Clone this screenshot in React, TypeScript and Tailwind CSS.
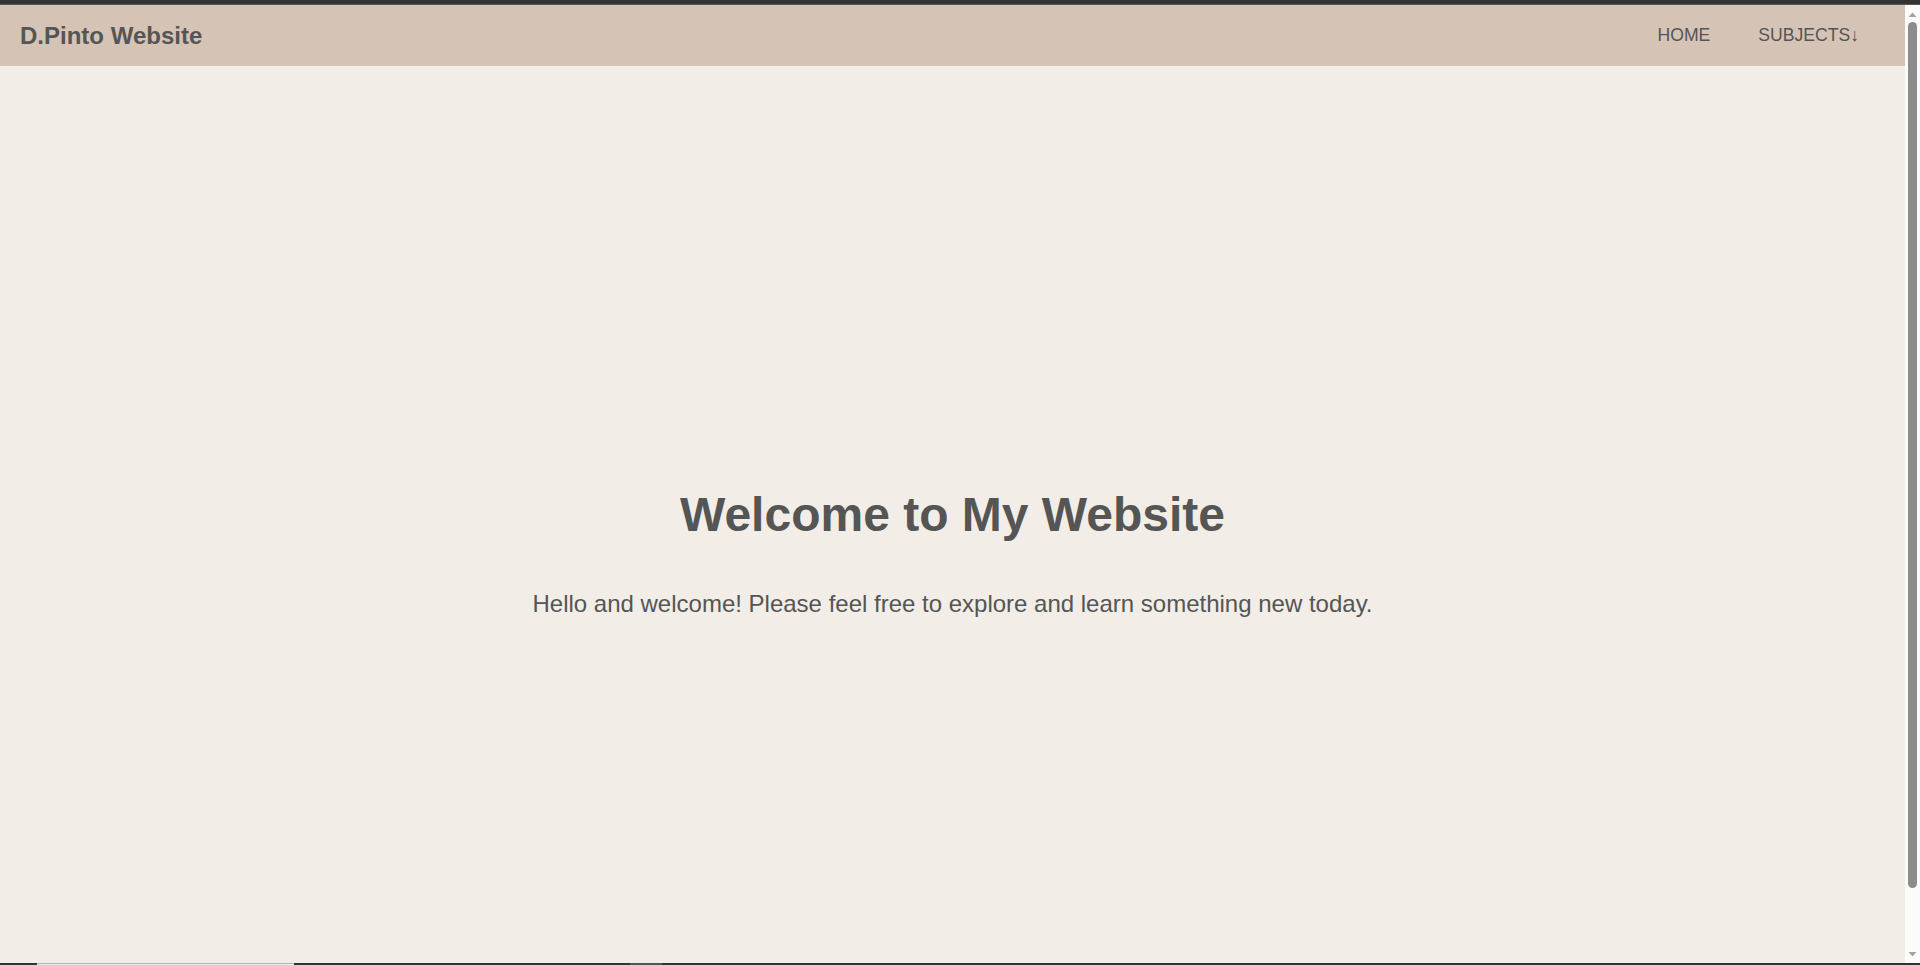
const NAV_LINKS = [
  { label: "HOME" },
  { label: "SUBJECTS\u2193" },
];

function Navbar() {
  return (
    <nav className="flex h-[61px] flex-shrink-0 items-center justify-between bg-[#d5c4b5] pl-5 pr-[22px]">
      <span className="text-[24px] font-bold leading-none text-[#555]">D.Pinto Website</span>
      <ul className="flex items-center">
        {NAV_LINKS.map(({ label }) => (
          <li key={label}>
            <a href="#" className="block px-6 pt-px text-[17.6px] leading-none text-[#555]">
              {label}
            </a>
          </li>
        ))}
      </ul>
    </nav>
  );
}

// window scrollbar as drawn in the screenshot
function Scrollbar() {
  return (
    <div className="flex w-[15px] flex-shrink-0 flex-col items-center bg-[#fbfbfb]">
      <svg width="15" height="17" viewBox="0 0 15 17" className="flex-shrink-0">
        <path d="M3.5 12 L7.5 7.5 L11.5 12 Z" fill="#a3a3a3" />
      </svg>
      <div className="h-[866px] w-[9px] rounded-full bg-[#8c8c8c]" />
      <div className="flex-1" />
      <svg width="15" height="17" viewBox="0 0 15 17" className="flex-shrink-0">
        <path d="M3.5 6 L7.5 10.5 L11.5 6 Z" fill="#a3a3a3" />
      </svg>
    </div>
  );
}

export default function App() {
  return (
    <div
      className="flex h-screen flex-col overflow-hidden bg-[#333]"
      style={{ fontFamily: '"Liberation Sans", Arial, sans-serif' }}
    >
      <div className="h-[4px] flex-shrink-0 bg-[#333]" />
      <div className="h-px flex-shrink-0 bg-[#575757]" />
      <div className="flex min-h-0 flex-1">
        <div className="min-w-0 flex-1 overflow-hidden bg-[#f2ede6]">
          <Navbar />
          <main className="flex h-[972px] flex-col items-center justify-center text-[#555]">
            <h1 className="mb-12 text-[48px] font-bold leading-[55px]">Welcome to My Website</h1>
            <p className="text-[24px] leading-[28px]">
              Hello and welcome! Please feel free to explore and learn something new today.
            </p>
          </main>
        </div>
        <Scrollbar />
      </div>
      <div className="flex h-[2px] flex-shrink-0 bg-[#333]">
        <div className="ml-[37px] w-[257px] border-t border-[#b5b5b5] bg-[#e8e8e8]" />
        <div className="ml-[336px] w-[32px] bg-[#555]" />
      </div>
    </div>
  );
}
